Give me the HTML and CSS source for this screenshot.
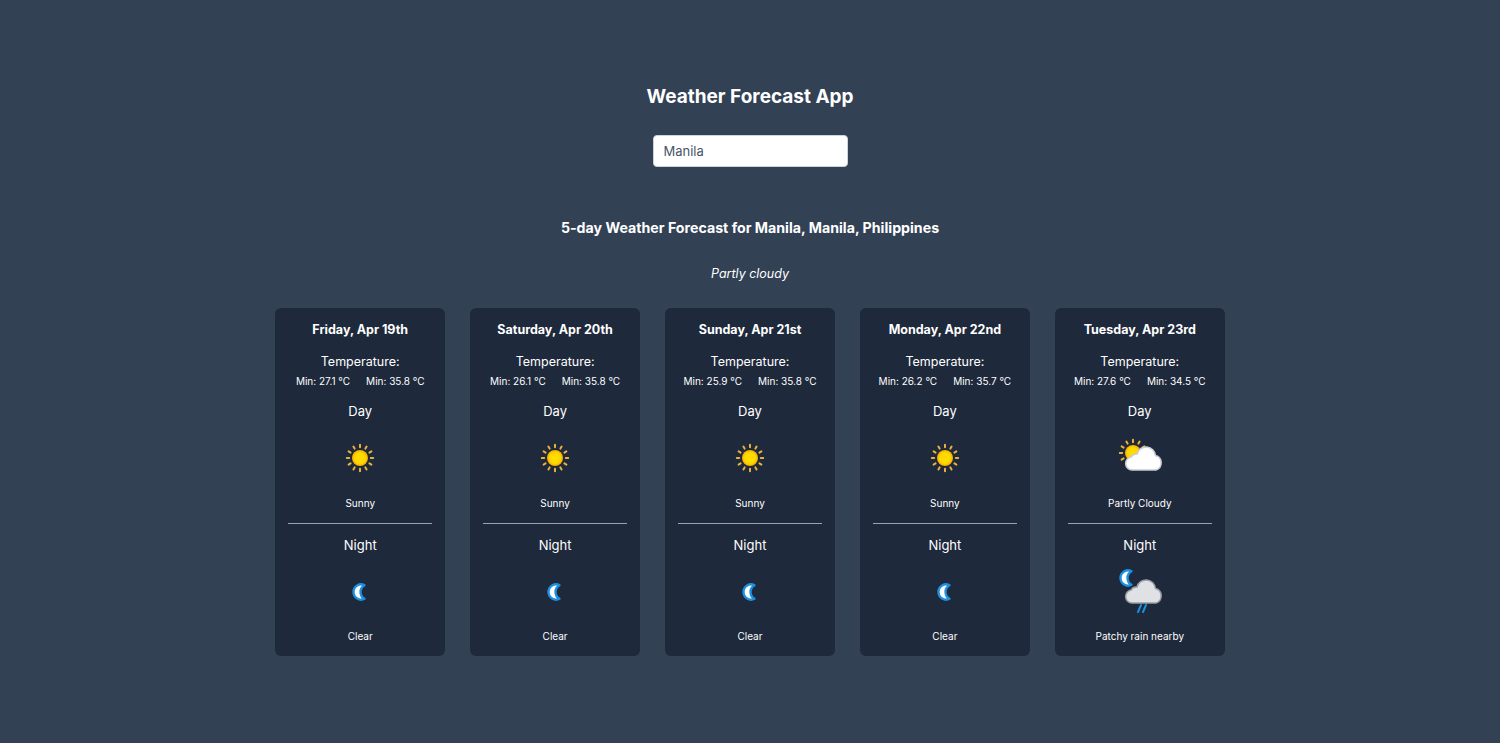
FILE: index.html
```html
<!DOCTYPE html>
<html lang="en">

<head>
    <meta charset="UTF-8">
    <meta name="viewport" content="width=device-width, initial-scale=1.0">
    <title>Weather Forecast App</title>
    <link rel="stylesheet" href="styles.css">
</head>

<body>
    <svg class="defs" width="0" height="0" aria-hidden="true">
        <defs>
            <radialGradient id="sunFill">
                <stop offset="0" stop-color="#ffe100" />
                <stop offset="0.7" stop-color="#ffd400" />
                <stop offset="1" stop-color="#f5a800" />
            </radialGradient>
            <g id="rays" stroke="#e9b144" stroke-width="2" stroke-linecap="round">
                <path d="M0-10.800v-2.400M0 10.800v2.400M-10.800 0h-2.400M10.800 0h2.400" />
                <path d="M-5.400-9.400l-1.200-2M5.400-9.400l1.200-2M-5.400 9.400l-1.200 2M5.400 9.400l1.200 2" />
                <path d="M-9.400-5.400l-2-1.200M9.400-5.400l2-1.200M-9.400 5.400l-2 1.200M9.400 5.400l2 1.200" />
            </g>
            <path id="cloud" d="M24 44a6.500 6.500 0 0 1-1-12.900a6 6 0 0 1 6-3a9.400 9.400 0 0 1 18.500 1.500a7.500 7.500 0 0 1 .5 14.400z" />
            <path id="crescent" d="M3.500-6.800a7.600 7.600 0 1 0 0 13.600a7.800 7.800 0 0 1 0-13.600z" fill="#ffffff" stroke="#1c8fe0" stroke-width="2.400" stroke-linejoin="round" />
            <symbol id="sun" viewBox="0 0 64 64">
                <use href="#rays" x="32" y="32" />
                <circle cx="32" cy="32" r="8" fill="url(#sunFill)" />
            </symbol>
            <symbol id="moon" viewBox="0 0 64 64">
                <use href="#crescent" x="33" y="32" />
            </symbol>
            <symbol id="partly" viewBox="0 0 64 64">
                <use href="#rays" x="25" y="27" />
                <circle cx="25" cy="27" r="8" fill="url(#sunFill)" />
                <use href="#cloud" fill="#ffffff" stroke="#c9ccd1" stroke-width="1.500" />
            </symbol>
            <symbol id="rain" viewBox="0 0 64 64">
                <use href="#crescent" x="20" y="18" />
                <use href="#cloud" y="-1" fill="#dfe1e4" stroke="#9a9da3" stroke-width="1.500" />
                <path d="M33 45l-3 7M38 45l-3 7" stroke="#1c8fe0" stroke-width="2" stroke-linecap="round" />
            </symbol>
        </defs>
    </svg>

    <div class="page">
        <h1 class="title">Weather Forecast App</h1>
        <input class="search" type="text" value="Manila">
        <h2 class="subtitle">5-day Weather Forecast for Manila, Manila, Philippines</h2>
        <p class="current">Partly cloudy</p>

        <div class="cards">
            <div class="card">
                <h3 class="date">Friday, Apr 19th</h3>
                <p class="temp-label">Temperature:</p>
                <div class="temps"><span>Min: 27.1 °C</span><span>Min: 35.8 °C</span></div>
                <p class="period">Day</p>
                <svg class="icon"><use href="#sun" /></svg>
                <p class="cond">Sunny</p>
                <hr class="divider">
                <p class="period">Night</p>
                <svg class="icon"><use href="#moon" /></svg>
                <p class="cond">Clear</p>
            </div>
            <div class="card">
                <h3 class="date">Saturday, Apr 20th</h3>
                <p class="temp-label">Temperature:</p>
                <div class="temps"><span>Min: 26.1 °C</span><span>Min: 35.8 °C</span></div>
                <p class="period">Day</p>
                <svg class="icon"><use href="#sun" /></svg>
                <p class="cond">Sunny</p>
                <hr class="divider">
                <p class="period">Night</p>
                <svg class="icon"><use href="#moon" /></svg>
                <p class="cond">Clear</p>
            </div>
            <div class="card">
                <h3 class="date">Sunday, Apr 21st</h3>
                <p class="temp-label">Temperature:</p>
                <div class="temps"><span>Min: 25.9 °C</span><span>Min: 35.8 °C</span></div>
                <p class="period">Day</p>
                <svg class="icon"><use href="#sun" /></svg>
                <p class="cond">Sunny</p>
                <hr class="divider">
                <p class="period">Night</p>
                <svg class="icon"><use href="#moon" /></svg>
                <p class="cond">Clear</p>
            </div>
            <div class="card">
                <h3 class="date">Monday, Apr 22nd</h3>
                <p class="temp-label">Temperature:</p>
                <div class="temps"><span>Min: 26.2 °C</span><span>Min: 35.7 °C</span></div>
                <p class="period">Day</p>
                <svg class="icon"><use href="#sun" /></svg>
                <p class="cond">Sunny</p>
                <hr class="divider">
                <p class="period">Night</p>
                <svg class="icon"><use href="#moon" /></svg>
                <p class="cond">Clear</p>
            </div>
            <div class="card">
                <h3 class="date">Tuesday, Apr 23rd</h3>
                <p class="temp-label">Temperature:</p>
                <div class="temps"><span>Min: 27.6 °C</span><span>Min: 34.5 °C</span></div>
                <p class="period">Day</p>
                <svg class="icon"><use href="#partly" /></svg>
                <p class="cond">Partly Cloudy</p>
                <hr class="divider">
                <p class="period">Night</p>
                <svg class="icon"><use href="#rain" /></svg>
                <p class="cond">Patchy rain nearby</p>
            </div>
        </div>
    </div>
</body>

</html>
```

FILE: styles.css
```css
body {
    margin: 0;
    background: #334155;
    color: #ffffff;
    font-family: Inter, "Noto Sans", sans-serif;
}

p {
    margin: 0;
}

.defs {
    display: block;
    height: 0;
}

.page {
    display: flex;
    flex-direction: column;
    align-items: center;
    height: 743px;
    padding-top: 85px;
    box-sizing: border-box;
}

.title {
    margin: 0;
    font-size: 19px;
    line-height: 24px;
    font-weight: 700;
}

.search {
    width: 195px;
    height: 32px;
    margin-top: 26px;
    padding: 0 10px;
    box-sizing: border-box;
    border: 1px solid #cbd5e1;
    border-radius: 4px;
    background: #ffffff;
    color: #475569;
    font-family: inherit;
    font-size: 13px;
}

.subtitle {
    margin: 50px 0 0;
    font-size: 14.200px;
    line-height: 22px;
    font-weight: 700;
}

.current {
    margin-top: 26px;
    font-size: 12.500px;
    line-height: 18px;
    font-style: italic;
}

.cards {
    display: grid;
    grid-template-columns: repeat(5, 170.400px);
    gap: 24.500px;
    margin-top: 25px;
}

.card {
    display: flex;
    flex-direction: column;
    align-items: center;
    height: 348px;
    padding: 12px 13px 0;
    box-sizing: border-box;
    border-radius: 6px;
    background: #1e293b;
}

.date {
    margin: 0;
    font-size: 12.500px;
    line-height: 20px;
    font-weight: 700;
}

.temp-label {
    margin-top: 13px;
    font-size: 12.500px;
    line-height: 18px;
}

.temps {
    display: flex;
    gap: 16px;
    margin-top: 3px;
    font-size: 10px;
    line-height: 14px;
}

.period {
    margin-top: 14px;
    font-size: 13px;
    line-height: 18px;
}

.icon {
    width: 64px;
    height: 64px;
    margin-top: 6px;
}

.cond {
    margin-top: 6px;
    font-size: 10px;
    line-height: 14px;
}

.divider {
    width: 100%;
    height: 1px;
    margin: 13px 0 0;
    border: none;
    background: #94a3b8;
}

.divider + .period {
    margin-top: 12px;
}

.divider ~ .cond {
    margin-top: 5px;
}
```
